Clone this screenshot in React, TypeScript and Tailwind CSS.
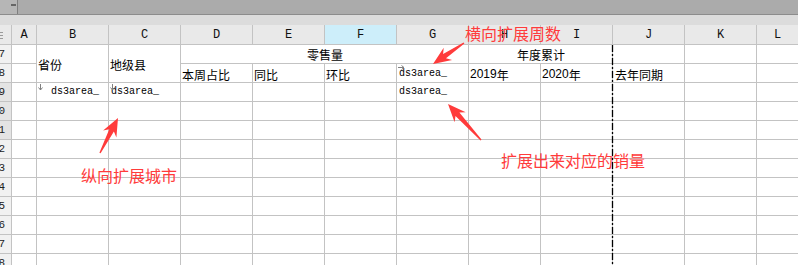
import React from 'react'

const COLS = ['A', 'B', 'C', 'D', 'E', 'F', 'G', 'H', 'I', 'J', 'K', 'L']
const BODY_ROWS = [9, 10, 11, 12, 13, 14, 15, 16, 17, 18]

// tapered annotation arrow, like the screenshot tool draws
function arrowPoints(tx: number, ty: number, hx: number, hy: number) {
  const dx = hx - tx
  const dy = hy - ty
  const len = Math.hypot(dx, dy)
  const ux = dx / len
  const uy = dy / len
  const nx = -uy
  const ny = ux
  const p = (bx: number, by: number, back: number, side: number) =>
    `${(bx - ux * back + nx * side).toFixed(1)},${(by - uy * back + ny * side).toFixed(1)}`
  return [
    p(tx, ty, 0, 0.7),
    p(hx, hy, 14, 2.6),
    p(hx, hy, 18, 7.5),
    `${hx},${hy}`,
    p(hx, hy, 18, -7.5),
    p(hx, hy, 14, -2.6),
    p(tx, ty, 0, -0.7),
  ].join(' ')
}

function RowHead({ n }: { n: number }) {
  const shaded = n >= 9 && n <= 11
  return (
    <div
      className={`flex items-center justify-end overflow-hidden pr-[6px] font-['Liberation_Mono',monospace] text-[11px] leading-none text-[#222] whitespace-nowrap ${shaded ? 'bg-[#e4e4e4]' : 'bg-[#f1f1f1]'}`}
    >
      {n}
    </div>
  )
}

function Cell({ children, className = '' }: { children?: React.ReactNode; className?: string }) {
  return <div className={`bg-white overflow-hidden whitespace-nowrap ${className}`}>{children}</div>
}

function Zh({ children, className = '' }: { children: React.ReactNode; className?: string }) {
  return (
    <Cell className={`flex items-end pl-[1px] font-['Noto_Sans_CJK_SC',sans-serif] text-[12px] leading-[15px] text-black ${className}`}>
      {children}
    </Cell>
  )
}

function Field({ mark, className = '' }: { mark?: 'down' | 'right'; className?: string }) {
  return (
    <Cell className={`relative flex items-end pb-[4px] font-['Liberation_Mono',monospace] text-[10px] leading-none text-black ${className}`}>
      {mark === 'down' && (
        <svg className="absolute left-[1px] top-[1px]" width="5" height="7" viewBox="0 0 5 7">
          <path d="M2.5 0 V6 M0.5 3.5 L2.5 6 L4.5 3.5" stroke="#808080" strokeWidth="1" fill="none" />
        </svg>
      )}
      {mark === 'right' && (
        <svg className="absolute left-[1px] top-[1px]" width="7" height="5" viewBox="0 0 7 5">
          <path d="M0 2.5 H6 M3.5 0.5 L6 2.5 L3.5 4.5" stroke="#808080" strokeWidth="1" fill="none" />
        </svg>
      )}
      ds3area_
    </Cell>
  )
}

export default function App() {
  return (
    <div className="relative w-[798px] h-[265px] overflow-hidden bg-white">
      {/* toolbar strip */}
      <div className="flex h-[15px] border-b border-[#8c8c8c]">
        <div className="relative w-[18px] bg-[#b6b6b6] border-r border-[#7f7f7f]">
          <div className="absolute left-[11px] top-[4px] w-[5px] h-[2px] bg-[#666]" />
        </div>
        <div className="flex-1 bg-[#ababab]" />
      </div>
      <div className="h-[10px] bg-[#dcdcdc]" />

      {/* sheet grid */}
      <div className="grid grid-cols-[11px_24px_repeat(10,71px)_41px] grid-rows-[19px_repeat(12,18px)] gap-px bg-[#c3c3c3]">
        <div className="flex flex-col gap-[2px] pt-[7px] bg-[#e9e9e9]">
          <div className="w-[3px] h-px bg-[#9a9a9a]" />
          <div className="w-[3px] h-px bg-[#9a9a9a]" />
          <div className="w-[3px] h-px bg-[#9a9a9a]" />
        </div>
        {COLS.map(c => (
          <div
            key={c}
            className={`flex items-center justify-center font-['Liberation_Mono',monospace] text-[12px] text-[#111] ${c === 'F' ? 'bg-[#cdeefa]' : 'bg-[#e9e9e9]'}`}
          >
            {c}
          </div>
        ))}

        {/* row 7 */}
        <RowHead n={7} />
        <Cell />
        <Zh className="row-span-2 !items-center pt-[2px]">省份</Zh>
        <Zh className="row-span-2 !items-center pt-[2px]">地级县</Zh>
        <Zh className="col-span-4 justify-center pb-[1px]">零售量</Zh>
        <Zh className="col-span-2 justify-center pb-[1px]">年度累计</Zh>
        <Cell />
        <Cell />
        <Cell />

        {/* row 8 */}
        <RowHead n={8} />
        <Cell />
        <Zh>本周占比</Zh>
        <Zh>同比</Zh>
        <Zh>环比</Zh>
        <Field mark="right" className="pl-[2px] !pb-[3px]" />
        <Zh>
          <span className="font-['Liberation_Sans',sans-serif]">2019</span>年
        </Zh>
        <Zh>
          <span className="font-['Liberation_Sans',sans-serif]">2020</span>年
        </Zh>
        <Zh className="pl-[2px]">去年同期</Zh>
        <Cell />
        <Cell />

        {/* rows 9-18 */}
        {BODY_ROWS.map(r => (
          <React.Fragment key={r}>
            <RowHead n={r} />
            <Cell />
            {r === 9 ? (
              <>
                <Field mark="down" className="pl-[14px]" />
                <Field mark="down" className="pl-[2px]" />
                <Cell />
                <Cell />
                <Cell />
                <Field className="pl-[2px]" />
              </>
            ) : (
              <>
                <Cell />
                <Cell />
                <Cell />
                <Cell />
                <Cell />
                <Cell />
              </>
            )}
            <Cell />
            <Cell />
            <Cell />
            <Cell />
            <Cell />
          </React.Fragment>
        ))}
      </div>

      {/* annotations */}
      <span className="absolute left-[465px] top-[23px] font-['Noto_Sans_CJK_SC',sans-serif] text-[16px] leading-[20px] text-[#ff3b3b]">
        横向扩展周数
      </span>
      <span className="absolute left-[81px] top-[165px] font-['Noto_Sans_CJK_SC',sans-serif] text-[16px] leading-[20px] text-[#ff3b3b]">
        纵向扩展城市
      </span>
      <span className="absolute left-[501px] top-[150px] font-['Noto_Sans_CJK_SC',sans-serif] text-[16px] leading-[20px] text-[#ff3b3b]">
        扩展出来对应的销量
      </span>

      <svg className="absolute left-0 top-0 pointer-events-none" width="798" height="265" viewBox="0 0 798 265">
        <polygon points={arrowPoints(464, 43, 433, 64)} fill="#ff3b3b" />
        <polygon points={arrowPoints(100, 153, 118, 118)} fill="#ff3b3b" />
        <polygon points={arrowPoints(481, 140, 448, 104)} fill="#ff3b3b" />
        {/* page break line */}
        <line x1="612.5" y1="45" x2="612.5" y2="265" stroke="#000" strokeWidth="1.3" strokeDasharray="7 2 2 2" />
      </svg>
    </div>
  )
}
